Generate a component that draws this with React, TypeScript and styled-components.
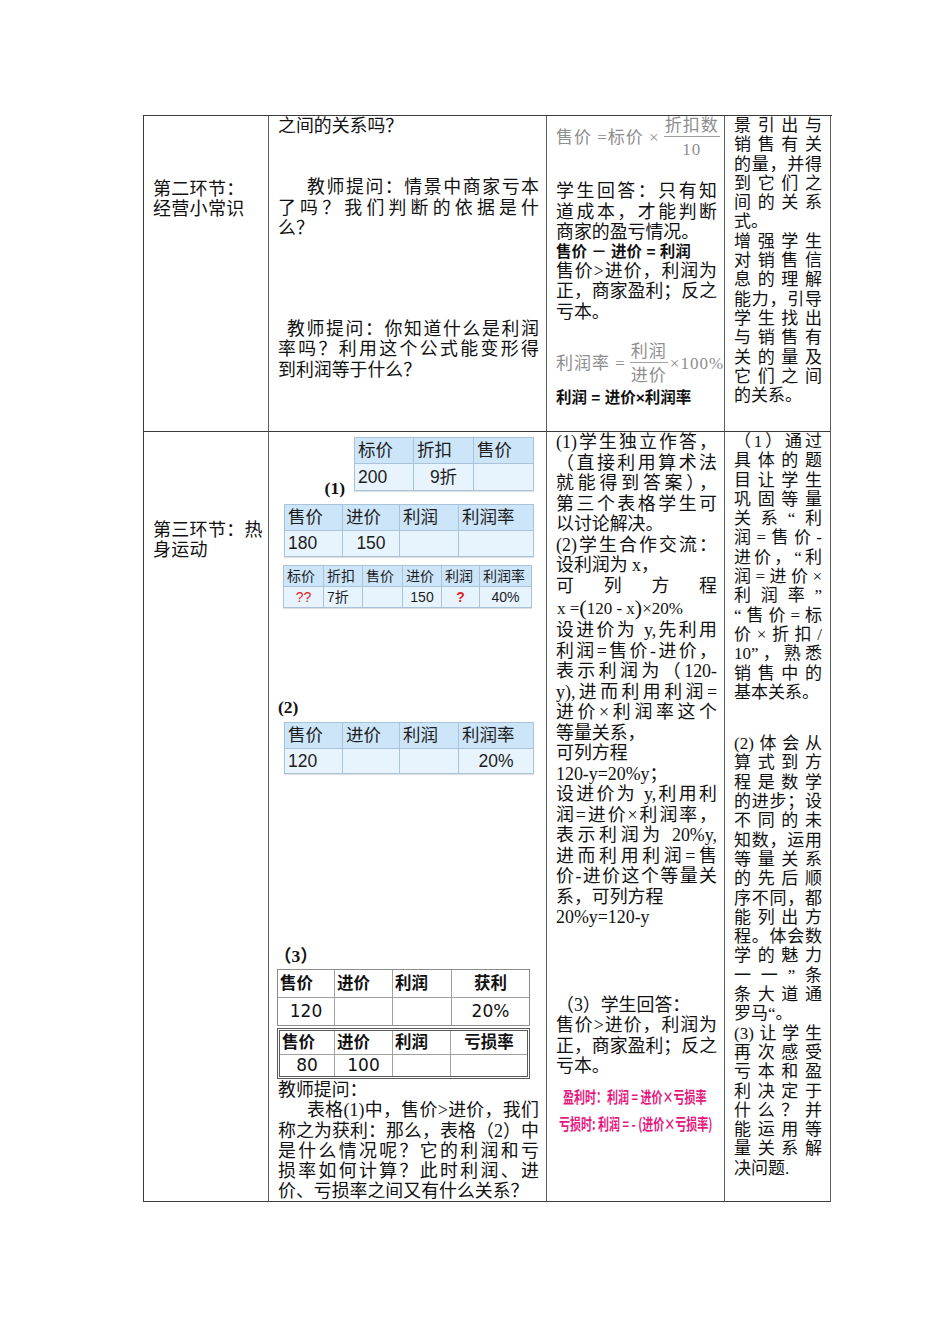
import styled, { createGlobalStyle } from 'styled-components';

const GlobalStyle = createGlobalStyle`
  html, body {
    margin: 0;
    padding: 0;
    background: #ffffff;
  }
`;

const Page = styled.div`
  width: 950px;
  min-height: 1344px;
  box-sizing: border-box;
  padding: 115px 0 0 143px;
  font-family: "Liberation Serif", "Noto Sans CJK SC", serif;
  color: #111;
`;

const Sheet = styled.div`
  display: grid;
  grid-template-columns: 125px 278px 178px 106px;
  grid-template-rows: 316px 770px;
  width: 688px;
  border-left: 1px solid #3a3a3a;
  border-top: 1px solid #3a3a3a;
`;

const Cell = styled.div<{ $pt?: number }>`
  box-sizing: border-box;
  border-right: 1px solid #5e5e5e;
  border-bottom: 1px solid #3a3a3a;
  overflow: hidden;
  padding-top: ${(p) => p.$pt ?? 0}px;
`;

const StageCell = styled(Cell)`
  padding-left: 9px;
  padding-right: 4px;
  font-size: 18px;
  line-height: 20px;
  letter-spacing: 0.3px;
`;

const TaskCell = styled(Cell)`
  padding-left: 9px;
  padding-right: 7px;
  font-size: 17.9px;
  line-height: 20.3px;
`;

const AnswerCell = styled(Cell)`
  padding-left: 9px;
  padding-right: 7px;
  font-size: 17.9px;
  line-height: 20.5px;
`;

const NoteCell = styled(Cell)`
  padding-left: 9px;
  padding-right: 8px;
  font-size: 17px;
  line-height: 19.3px;
`;

const Para = styled.div<{ $mt?: number }>`
  margin-top: ${(p) => p.$mt ?? 0}px;
`;

const Line = styled.div<{ $j?: boolean; $indent?: number }>`
  white-space: nowrap;
  text-align: left;
  text-align-last: ${(p) => (p.$j ? 'justify' : 'left')};
  text-indent: ${(p) => p.$indent ?? 0}px;
`;

/* gray formula pictures */
const Formula = styled.div<{ $mt?: number }>`
  display: flex;
  align-items: center;
  margin-top: ${(p) => p.$mt ?? 0}px;
  color: #8e8e8e;
  font-size: 17px;
  letter-spacing: 1px;
  white-space: nowrap;
`;

const Frac = styled.span`
  display: inline-flex;
  flex-direction: column;
  align-items: center;
  margin: 0 2px 0 4px;
`;

const Num = styled.span`
  line-height: 20px;
  padding: 0 1px;
  border-bottom: 1px solid #a0a0a0;
`;

const Den = styled.span`
  line-height: 20px;
  padding-top: 3px;
`;

const KeyLine = styled.div<{ $mt?: number }>`
  margin-top: ${(p) => p.$mt ?? 0}px;
  font-family: "Liberation Sans", "Noto Sans CJK SC", sans-serif;
  font-weight: 700;
  font-size: 15.5px;
  line-height: 18px;
  white-space: nowrap;
  color: #111;
`;

const Equation = styled.div`
  font-size: 17px;
  line-height: 23px;
  white-space: nowrap;
  padding-left: 1px;
`;

const Paren = styled.span`
  font-size: 22px;
  vertical-align: -1px;
`;

const PinkNote = styled.div<{ $ml: number; $mt?: number }>`
  margin-top: ${(p) => p.$mt ?? 0}px;
  margin-left: ${(p) => p.$ml}px;
  font-family: "Noto Sans CJK SC", sans-serif;
  font-weight: 700;
  font-size: 15.5px;
  line-height: 27px;
  color: #e5177e;
  white-space: nowrap;
  transform: scaleX(0.71);
  transform-origin: left center;
`;

/* case tables */
const CaseLabel = styled.div<{ $mt?: number; $ml?: number }>`
  margin-top: ${(p) => p.$mt ?? 0}px;
  margin-left: ${(p) => p.$ml ?? 0}px;
  font-weight: 700;
  font-size: 17.5px;
  line-height: 20px;
`;

const CaseRow = styled.div`
  display: grid;
  grid-template-columns: 76px auto;
  align-items: end;
  margin-top: 5px;
`;

const SideLabel = styled(CaseLabel)`
  justify-self: end;
  padding-right: 9px;
  margin-bottom: -7px;
`;

const BlueTable = styled.div<{ $cols: string; $mt?: number; $ml?: number; $fs: number }>`
  display: grid;
  grid-template-columns: ${(p) => p.$cols};
  justify-self: start;
  width: max-content;
  margin-top: ${(p) => p.$mt ?? 0}px;
  margin-left: ${(p) => p.$ml ?? 0}px;
  border-top: 1px solid #a9c4da;
  border-left: 1px solid #a9c4da;
  box-shadow: 0 1px 1px rgba(0, 0, 0, 0.12);
  font-family: "Liberation Sans", "Noto Sans CJK SC", sans-serif;
  font-size: ${(p) => p.$fs}px;
  color: #1d1d1d;
`;

const BlueHead = styled.div<{ $h: number }>`
  box-sizing: border-box;
  height: ${(p) => p.$h}px;
  line-height: ${(p) => p.$h - 1}px;
  padding: 0 3px;
  background: #cde5f8;
  border-right: 1px solid #a9c4da;
  border-bottom: 1px solid #a9c4da;
  white-space: nowrap;
`;

const BlueData = styled.div<{ $h: number; $align?: 'left' | 'center' | 'right' }>`
  box-sizing: border-box;
  height: ${(p) => p.$h}px;
  line-height: ${(p) => p.$h - 1}px;
  padding: 0 3px;
  text-align: ${(p) => p.$align ?? 'left'};
  background: #e8f4fd;
  border-right: 1px solid #a9c4da;
  border-bottom: 1px solid #a9c4da;
  white-space: nowrap;
`;

const Ask = styled.span<{ $bold?: boolean }>`
  color: #e3231b;
  font-weight: ${(p) => (p.$bold ? 700 : 400)};
`;

const PlainTable = styled.div<{ $double?: boolean; $mt?: number }>`
  display: grid;
  grid-template-columns: ${(p) => (p.$double ? '55px 58px 58px 76px' : '57px 58px 59px 77px')};
  width: max-content;
  margin-top: ${(p) => p.$mt ?? 0}px;
  margin-left: -1px;
  border: ${(p) => (p.$double ? '3px double #5a5a5a' : '1px solid #8c8c8c')};
  font-family: "DejaVu Sans", "Noto Sans CJK SC", sans-serif;
  color: #111;
`;

const PlainCell = styled.div<{ $h: number; $head?: boolean; $align?: 'left' | 'center' }>`
  box-sizing: border-box;
  height: ${(p) => p.$h}px;
  line-height: ${(p) => p.$h - 1}px;
  padding: 0 2px;
  text-align: ${(p) => p.$align ?? 'left'};
  font-size: ${(p) => (p.$head ? 16.5 : 17)}px;
  font-weight: ${(p) => (p.$head ? 700 : 400)};
  border-right: 1px solid #a0a0a0;
  border-bottom: 1px solid #a0a0a0;
  white-space: nowrap;
  &:nth-child(4n) {
    border-right: none;
  }
  &:nth-last-child(-n + 4) {
    border-bottom: none;
  }
`;

export default function App() {
  return (
    <Page>
      <GlobalStyle />
      <Sheet>
        {/* row: 第二环节 */}
        <StageCell $pt={63}>
          <Line>第二环节：</Line>
          <Line>经营小常识</Line>
        </StageCell>

        <TaskCell>
          <Para>
            <Line>之间的关系吗？</Line>
          </Para>
          <Para $mt={41}>
            <Line $j $indent={29}>教师提问：情景中商家亏本</Line>
            <Line $j>了吗？我们判断的依据是什</Line>
            <Line>么？</Line>
          </Para>
          <Para $mt={81}>
            <Line $j $indent={9}>教师提问：你知道什么是利润</Line>
            <Line $j>率吗？利用这个公式能变形得</Line>
            <Line>到利润等于什么？</Line>
          </Para>
        </TaskCell>

        <AnswerCell>
          <Formula>
            <span>售价 =标价 ×</span>
            <Frac>
              <Num>折扣数</Num>
              <Den>10</Den>
            </Frac>
          </Formula>
          <Para $mt={21}>
            <Line $j>学生回答：只有知</Line>
            <Line $j>道成本，才能判断</Line>
            <Line>商家的盈亏情况。</Line>
          </Para>
          <KeyLine>售价 － 进价 = 利润</KeyLine>
          <Para>
            <Line $j>售价&gt;进价，利润为</Line>
            <Line $j>正，商家盈利；反之</Line>
            <Line>亏本。</Line>
          </Para>
          <Formula $mt={20}>
            <span>利润率 =</span>
            <Frac>
              <Num>利润</Num>
              <Den>进价</Den>
            </Frac>
            <span>×100%</span>
          </Formula>
          <KeyLine $mt={3}>利润 = 进价×利润率</KeyLine>
        </AnswerCell>

        <NoteCell>
          <Line $j>景引出与</Line>
          <Line $j>销售有关</Line>
          <Line $j>的量，并得</Line>
          <Line $j>到它们之</Line>
          <Line $j>间的关系</Line>
          <Line>式。</Line>
          <Line $j>增强学生</Line>
          <Line $j>对销售信</Line>
          <Line $j>息的理解</Line>
          <Line $j>能力，引导</Line>
          <Line $j>学生找出</Line>
          <Line $j>与销售有</Line>
          <Line $j>关的量及</Line>
          <Line $j>它们之间</Line>
          <Line>的关系。</Line>
        </NoteCell>

        {/* row: 第三环节 */}
        <StageCell $pt={88}>
          <Line>第三环节：热</Line>
          <Line>身运动</Line>
        </StageCell>

        <TaskCell>
          <CaseRow>
            <SideLabel>(1)</SideLabel>
            <BlueTable $cols="59px 60px 60px" $fs={17.5}>
              <BlueHead $h={26}>标价</BlueHead>
              <BlueHead $h={26}>折扣</BlueHead>
              <BlueHead $h={26}>售价</BlueHead>
              <BlueData $h={27}>200</BlueData>
              <BlueData $h={27} $align="center">9折</BlueData>
              <BlueData $h={27} />
            </BlueTable>
          </CaseRow>

          <BlueTable $cols="58px 57px 59px 75px" $mt={13} $ml={6} $fs={17.5}>
            <BlueHead $h={26}>售价</BlueHead>
            <BlueHead $h={26}>进价</BlueHead>
            <BlueHead $h={26}>利润</BlueHead>
            <BlueHead $h={26}>利润率</BlueHead>
            <BlueData $h={26}>180</BlueData>
            <BlueData $h={26} $align="center">150</BlueData>
            <BlueData $h={26} />
            <BlueData $h={26} />
          </BlueTable>

          <BlueTable $cols="40px 39px 40px 39px 38px 52px" $mt={8} $ml={5} $fs={14}>
            <BlueHead $h={21}>标价</BlueHead>
            <BlueHead $h={21}>折扣</BlueHead>
            <BlueHead $h={21}>售价</BlueHead>
            <BlueHead $h={21}>进价</BlueHead>
            <BlueHead $h={21}>利润</BlueHead>
            <BlueHead $h={21}>利润率</BlueHead>
            <BlueData $h={21} $align="center"><Ask>??</Ask></BlueData>
            <BlueData $h={21}>7折</BlueData>
            <BlueData $h={21} />
            <BlueData $h={21} $align="center">150</BlueData>
            <BlueData $h={21} $align="center"><Ask $bold>?</Ask></BlueData>
            <BlueData $h={21} $align="center">40%</BlueData>
          </BlueTable>

          <CaseLabel $mt={89}>(2)</CaseLabel>
          <BlueTable $cols="58px 57px 59px 75px" $mt={5} $ml={6} $fs={17.5}>
            <BlueHead $h={26}>售价</BlueHead>
            <BlueHead $h={26}>进价</BlueHead>
            <BlueHead $h={26}>利润</BlueHead>
            <BlueHead $h={26}>利润率</BlueHead>
            <BlueData $h={25}>120</BlueData>
            <BlueData $h={25} />
            <BlueData $h={25} />
            <BlueData $h={25} $align="center">20%</BlueData>
          </BlueTable>

          <CaseLabel $mt={172} $ml={-4}>（3）</CaseLabel>
          <PlainTable $mt={3}>
            <PlainCell $h={28} $head>售价</PlainCell>
            <PlainCell $h={28} $head>进价</PlainCell>
            <PlainCell $h={28} $head>利润</PlainCell>
            <PlainCell $h={28} $head $align="center">获利</PlainCell>
            <PlainCell $h={27} $align="center">120</PlainCell>
            <PlainCell $h={27} />
            <PlainCell $h={27} />
            <PlainCell $h={27} $align="center">20%</PlainCell>
          </PlainTable>
          <PlainTable $double $mt={2}>
            <PlainCell $h={24} $head>售价</PlainCell>
            <PlainCell $h={24} $head>进价</PlainCell>
            <PlainCell $h={24} $head>利润</PlainCell>
            <PlainCell $h={24} $head $align="center">亏损率</PlainCell>
            <PlainCell $h={21} $align="center">80</PlainCell>
            <PlainCell $h={21} $align="center">100</PlainCell>
            <PlainCell $h={21} />
            <PlainCell $h={21} />
          </PlainTable>

          <Para $mt={1}>
            <Line>教师提问：</Line>
            <Line $j $indent={29}>表格(1)中，售价&gt;进价，我们</Line>
            <Line $j>称之为获利：那么，表格（2）中</Line>
            <Line $j>是什么情况呢？它的利润和亏</Line>
            <Line $j>损率如何计算？此时利润、进</Line>
            <Line>价、亏损率之间又有什么关系？</Line>
          </Para>
        </TaskCell>

        <AnswerCell>
          <Line $j>(1)学生独立作答，</Line>
          <Line $j>（直接利用算术法</Line>
          <Line $j>就能得到答案），</Line>
          <Line $j>第三个表格学生可</Line>
          <Line>以讨论解决。</Line>
          <Line $j>(2)学生合作交流：</Line>
          <Line>设利润为 x，</Line>
          <Line $j>可列方程</Line>
          <Equation>
            x =<Paren>(</Paren>120 - x<Paren>)</Paren>×20%
          </Equation>
          <Line $j>设进价为 y,先利用</Line>
          <Line $j>利润=售价-进价，</Line>
          <Line $j>表示利润为（120-</Line>
          <Line $j>y),进而利用利润=</Line>
          <Line $j>进价×利润率这个</Line>
          <Line>等量关系，</Line>
          <Line>可列方程</Line>
          <Line>120-y=20%y；</Line>
          <Line $j>设进价为 y,利用利</Line>
          <Line $j>润=进价×利润率，</Line>
          <Line $j>表示利润为 20%y,</Line>
          <Line $j>进而利用利润=售</Line>
          <Line $j>价-进价这个等量关</Line>
          <Line>系，可列方程</Line>
          <Line>20%y=120-y</Line>
          <Para $mt={67}>
            <Line>（3）学生回答：</Line>
            <Line $j>售价&gt;进价，利润为</Line>
            <Line $j>正，商家盈利；反之</Line>
            <Line>亏本。</Line>
          </Para>
          <PinkNote $ml={7} $mt={6}>盈利时：利润 = 进价×亏损率</PinkNote>
          <PinkNote $ml={3}>亏损时: 利润 = -  (进价×亏损率)</PinkNote>
        </AnswerCell>

        <NoteCell>
          <Line $j>（1）通过</Line>
          <Line $j>具体的题</Line>
          <Line $j>目让学生</Line>
          <Line $j>巩固等量</Line>
          <Line $j>关系“利</Line>
          <Line $j>润=售价-</Line>
          <Line $j>进价，“利</Line>
          <Line $j>润=进价×</Line>
          <Line $j>利润率”</Line>
          <Line $j>“售价=标</Line>
          <Line $j>价×折扣/</Line>
          <Line $j>10”，熟悉</Line>
          <Line $j>销售中的</Line>
          <Line>基本关系。</Line>
          <Para $mt={32}>
            <Line $j>(2)体会从</Line>
            <Line $j>算式到方</Line>
            <Line $j>程是数学</Line>
            <Line $j>的进步；设</Line>
            <Line $j>不同的未</Line>
            <Line $j>知数，运用</Line>
            <Line $j>等量关系</Line>
            <Line $j>的先后顺</Line>
            <Line $j>序不同，都</Line>
            <Line $j>能列出方</Line>
            <Line $j>程。体会数</Line>
            <Line $j>学的魅力</Line>
            <Line $j>一一”条</Line>
            <Line $j>条大道通</Line>
            <Line>罗马“。</Line>
            <Line $j>(3)让学生</Line>
            <Line $j>再次感受</Line>
            <Line $j>亏本和盈</Line>
            <Line $j>利决定于</Line>
            <Line $j>什么？并</Line>
            <Line $j>能运用等</Line>
            <Line $j>量关系解</Line>
            <Line>决问题.</Line>
          </Para>
        </NoteCell>
      </Sheet>
    </Page>
  );
}
